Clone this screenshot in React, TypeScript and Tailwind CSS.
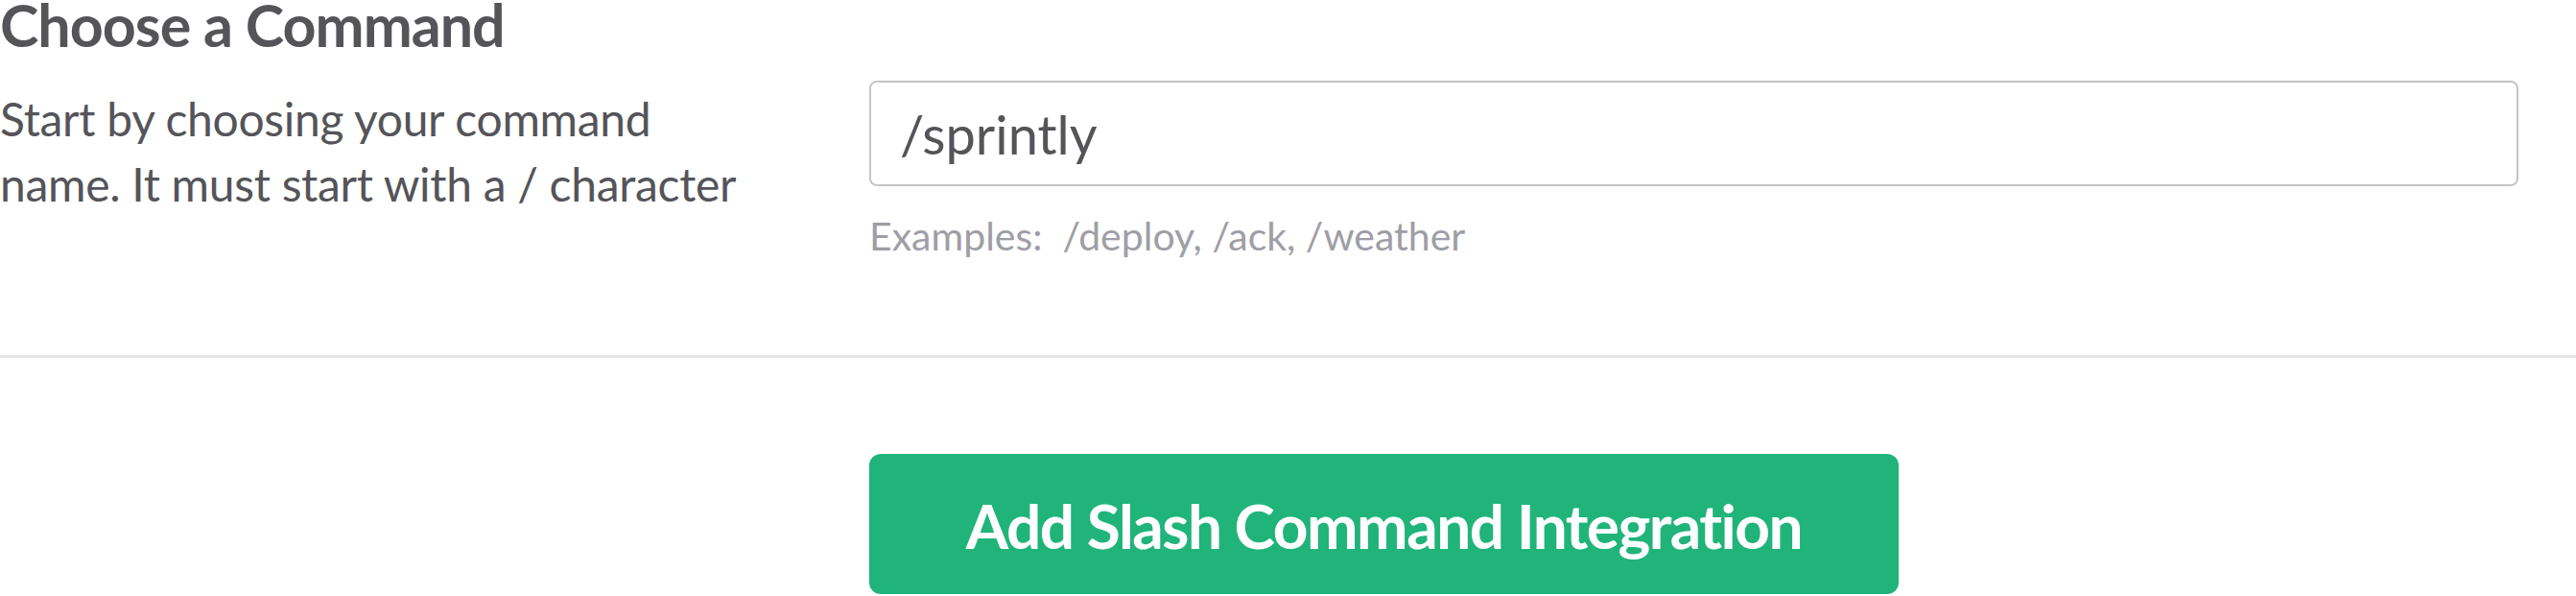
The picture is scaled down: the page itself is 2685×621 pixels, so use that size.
export default function App() {
  return (
    <div className="w-full bg-white font-['Lato','Liberation_Sans',sans-serif] text-[#555459]">
      <section className="pr-[60px]">
        <h2 className="pt-[2px] text-[61px] font-bold leading-[48px] tracking-[-1px]">Choose a Command</h2>
        <div className="mt-[34px] grid grid-cols-[906px_1fr]">
          <p className="mt-[6px] w-[780px] text-[48px] leading-[68px] tracking-[-0.3px]">
            Start by choosing your command name. It must start with a / character
          </p>
          <div>
            <input
              type="text"
              defaultValue="/sprintly"
              className="h-[110px] w-full rounded-[8px] border-2 border-[#c5c5c5] bg-white pl-[30px] text-[56px] text-[#555459] outline-none"
            />
            <p className="mt-[26px] text-[41px] leading-[52px] text-[#9e9ea6]">
              Examples:&nbsp; /deploy, /ack, /weather
            </p>
          </div>
        </div>
      </section>
      <hr className="mt-[98px] border-0 border-t-[3px] border-[#e5e5e5]" />
      <div className="mt-[100px] grid grid-cols-[906px_1fr]">
        <div />
        <div>
          <button
            type="button"
            className="h-[146px] w-[1073px] rounded-[12px] bg-[#20b47b] pt-[4px] text-[64px] font-bold tracking-[-1.5px] text-white"
          >
            Add Slash Command Integration
          </button>
        </div>
      </div>
    </div>
  )
}
